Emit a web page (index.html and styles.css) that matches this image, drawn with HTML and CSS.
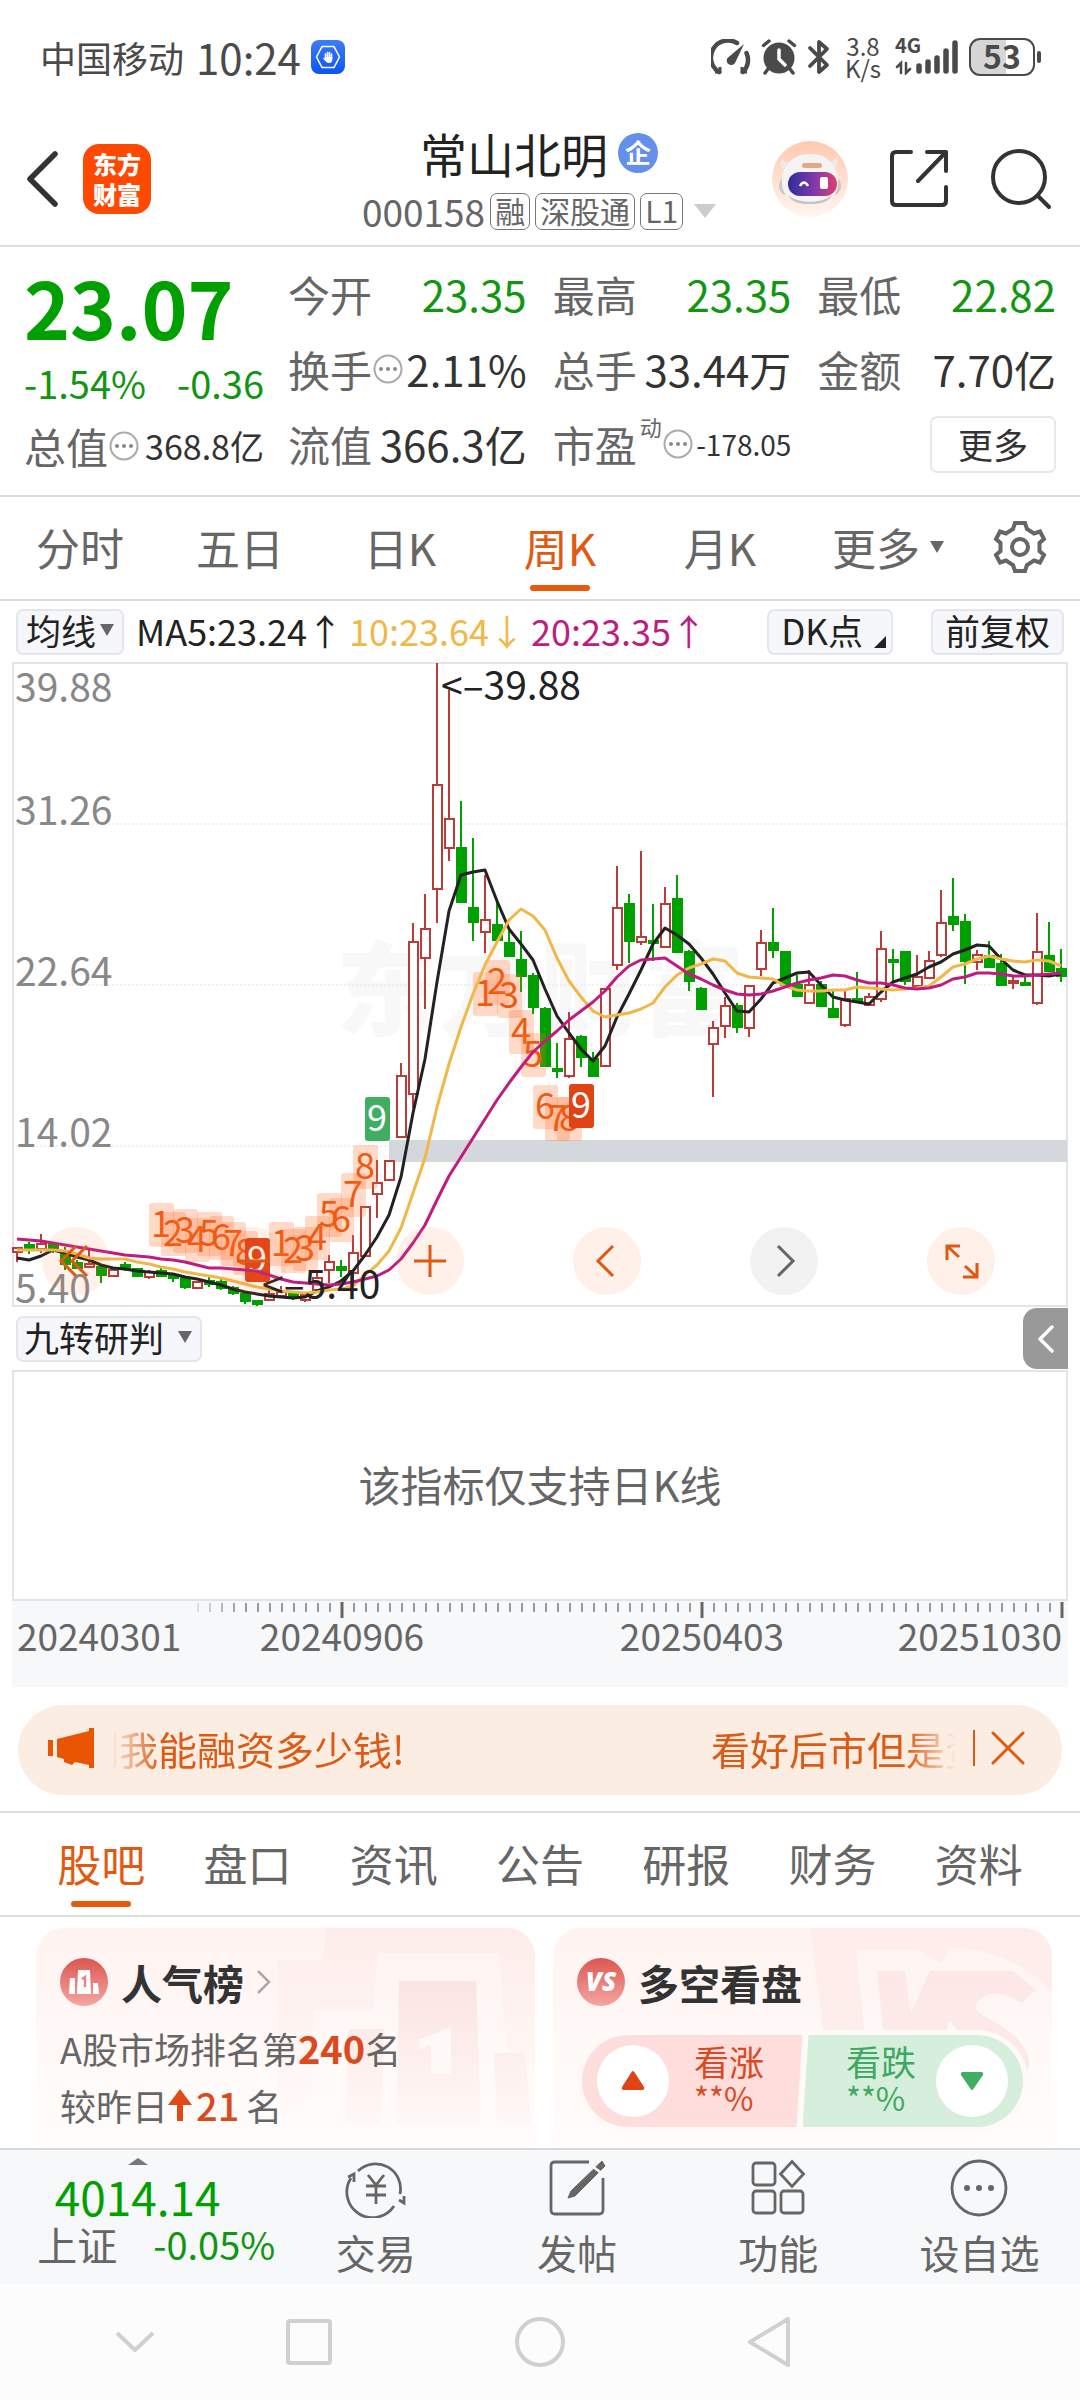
FILE: index.html
```html
<!DOCTYPE html>
<html lang="zh-CN">
<head>
<meta charset="utf-8">
<meta name="viewport" content="width=device-width, initial-scale=1">
<title>常山北明 000158</title>
<link rel="stylesheet" href="styles.css">
</head>
<body>
<div class="status">
  <span class="carrier">中国移动</span>
  <span class="clock">10:24</span>
  <svg class="hand" width="34" height="34" viewBox="0 0 34 34" aria-hidden="true">
    <defs><linearGradient id="blue" x1="0" y1="0" x2="0" y2="1"><stop offset="0" stop-color="#3c7cf5"/><stop offset="1" stop-color="#0d55f5"/></linearGradient></defs>
    <rect width="34" height="34" rx="8" fill="url(#blue)"/>
    <path d="M11 6.500H23L28.500 17 23 27.500H11L5.500 17Z" fill="none" stroke="#fff" stroke-width="1.600" stroke-linejoin="round"/>
    <path d="M14.500 14V18M16.500 12.500V18M18.500 12.500V18M20.500 14V19" stroke="#fff" stroke-width="1.600" stroke-linecap="round"/>
    <path d="M13.700 17H21.300V19C21.300 22 20 23 18 23 15.500 23 14.500 21 12 18.500 12.500 17.300 13.300 17.800 14 19Z" fill="#fff"/>
  </svg>
  <div class="status-icons">
    <svg width="40" height="36" viewBox="0 0 40 36" fill="none" stroke="#4a4a4a" stroke-width="4.500" aria-hidden="true">
      <path d="M8 33A17 17 0 0 1 26 4M35.500 14A17 17 0 0 1 32 33" stroke-linecap="round"/>
      <path d="M4 33H9V28M36 33H31V28" stroke-width="3"/>
      <path d="M33 5L24 24A4.500 4.500 0 0 1 16.500 19Z" fill="#4a4a4a" stroke="none"/>
    </svg>
    <svg width="36" height="36" viewBox="0 0 36 36" fill="none" stroke="#4a4a4a" stroke-linecap="round" aria-hidden="true">
      <circle cx="18" cy="19" r="15.500" fill="#4a4a4a" stroke="none"/>
      <path d="M2.500 6.500L8 2M33.500 6.500L28 2M7 30L4 34M29 30L32 34" stroke-width="3.500"/>
      <path d="M18 11V20L24 26" stroke="#fff" stroke-width="3.500"/>
    </svg>
    <svg width="24" height="36" viewBox="0 0 24 36" fill="none" stroke="#4a4a4a" stroke-width="3.800" stroke-linejoin="round" stroke-linecap="round" aria-hidden="true">
      <path d="M3 9L20 26 12 33V3L20 10 3 27"/>
    </svg>
    <div class="speed"><span>3.8</span><span>K/s</span></div>
    <div class="signal">
      <span class="net">4G</span>
      <svg width="64" height="36" viewBox="0 0 64 36" fill="none" stroke="#4a4a4a" stroke-linecap="round" aria-hidden="true">
        <path d="M24 27V32M33 23V32M42 19V32M51 12V32M60 4V32" stroke-width="5.500"/>
        <path d="M2 28L6 24V34M11 24V34L15 30" stroke-width="2.500"/>
      </svg>
    </div>
    <div class="battery"><span>53</span></div>
  </div>
</div>

<header class="header">
  <div class="header-left">
    <button class="icon-btn" aria-label="返回">
      <svg width="34" height="58" viewBox="0 0 34 58" fill="none" stroke="#333" stroke-width="5.500" stroke-linecap="round" stroke-linejoin="round"><path d="M29 4L4 29 29 54"/></svg>
    </button>
    <a href="#home" class="logo"><span>东方</span><span>财富</span></a>
  </div>
  <div class="header-title">
    <h1>常山北明<span class="ent">企</span></h1>
    <div class="code-row"><span class="code">000158</span><span class="tag">融</span><span class="tag">深股通</span><span class="tag">L1</span><i class="tri tri-light"></i></div>
  </div>
  <div class="header-right">
    <button class="icon-btn" aria-label="智能助手">
      <svg width="76" height="76" viewBox="0 0 76 76">
        <defs>
          <linearGradient id="peach" x1="0" y1="0" x2="0" y2="1"><stop offset="0" stop-color="#ffc9ae"/><stop offset="1" stop-color="#fff6f1"/></linearGradient>
          <linearGradient id="visor"><stop offset="0" stop-color="#2b2d9e"/><stop offset=".6" stop-color="#8c3aa8"/><stop offset="1" stop-color="#e0406a"/></linearGradient>
        </defs>
        <circle cx="38" cy="38" r="38" fill="url(#peach)"/>
        <path d="M9 17C9 27 10 30 18 31L22 21C14 23 11 20 9 17ZM65 15C66 25 64 29 57 29L53 20C60 22 63 19 65 15Z" fill="#efe9ea"/>
        <rect x="7" y="36" width="62" height="18" rx="8" fill="#cfc7cd"/>
        <path d="M38 13C57 13 66 26 66 41 66 56 56 62 38 62S10 56 10 41C10 26 19 13 38 13Z" fill="#f6f3f4"/>
        <path d="M16 54C25 63 51 63 60 54 56 62 48 63 38 63S20 62 16 54Z" fill="#c9c0ca"/>
        <rect x="16" y="31" width="49" height="24" rx="12" fill="url(#visor)"/>
        <path d="M28 45Q32 38 36 45" fill="none" stroke="#fff" stroke-width="2.500"/>
        <rect x="48" y="36" width="8" height="12" rx="2" fill="#fff"/>
        <rect x="30" y="22" width="20" height="5" rx="2.500" fill="#e5a981"/>
      </svg>
    </button>
    <button class="icon-btn" aria-label="分享">
      <svg width="58" height="60" viewBox="0 0 58 60" fill="none" stroke="#333" stroke-width="4" stroke-linecap="round" stroke-linejoin="round"><path d="M21 3H6Q2 3 2 7V52Q2 56 6 56H52Q56 56 56 52V38M37 3H56V22M56 3L28 32"/></svg>
    </button>
    <button class="icon-btn" aria-label="搜索">
      <svg width="62" height="62" viewBox="0 0 62 62" fill="none" stroke="#333" stroke-width="4" stroke-linecap="round"><circle cx="29" cy="29" r="26"/><path d="M48 48L59 59"/></svg>
    </button>
  </div>
</header>

<section class="quote">
  <div class="price-col">
    <strong class="price">23.07</strong>
    <div class="change"><span>-1.54%</span><span>-0.36</span></div>
    <div class="cell"><span class="label">总值<svg class="dots"><use href="#dots"/></svg></span><span class="value mid">368.8亿</span></div>
  </div>
  <div class="facts">
    <div class="cell"><span class="label">今开</span><span class="value down">23.35</span></div>
    <div class="cell"><span class="label">最高</span><span class="value down">23.35</span></div>
    <div class="cell"><span class="label">最低</span><span class="value down">22.82</span></div>
    <div class="cell"><span class="label">换手<svg class="dots"><use href="#dots"/></svg></span><span class="value">2.11%</span></div>
    <div class="cell"><span class="label">总手</span><span class="value">33.44万</span></div>
    <div class="cell"><span class="label">金额</span><span class="value">7.70亿</span></div>
    <div class="cell"><span class="label">流值</span><span class="value">366.3亿</span></div>
    <div class="cell"><span class="label">市盈<sup>动</sup><svg class="dots"><use href="#dots"/></svg></span><span class="value small">-178.05</span></div>
    <div class="cell cell-end"><button class="more">更多</button></div>
  </div>
</section>

<nav class="periods">
  <button>分时</button><button>五日</button><button>日K</button><button class="on">周K</button><button>月K</button><button class="has-tri">更多<i class="tri tri-small"></i></button>
  <button aria-label="设置"><svg width="54" height="54" viewBox="-27 -27 54 54" fill="none" stroke="#666" stroke-width="4"><path d="M-5-24H5L7-18 14-13.500 20-15.500 24-8 19.500-4V4L24 8 20 15.500 14 13.500 7 18 5 24H-5L-7 18-14 13.500-20 15.500-24 8-19.500 4V-4L-24-8-20-15.500-14-13.500-7-18Z"/><circle r="8"/></svg></button>
</nav>

<div class="ma-row">
  <button class="chip">均线<i class="tri tri-small"></i></button>
  <span class="ma"><span>MA5:23.24↑</span><span class="ma10">10:23.64↓</span><span class="ma20">20:23.35↑</span></span>
  <button class="chip chip-dk">DK点<i class="corner"></i></button>
  <button class="chip">前复权</button>
</div>

<section class="chart">
  <svg id="kline" viewBox="0 0 1056 645" role="img" aria-label="周K线图"></svg>
  <div class="chart-tools">
    <button aria-label="后退"><svg viewBox="0 0 68 68"><path d="M34 19L19 34 34 49M45 19L30 34 45 49"/></svg></button>
    <button aria-label="缩小"><svg viewBox="0 0 68 68"><path d="M18 34H50"/></svg></button>
    <button aria-label="放大"><svg viewBox="0 0 68 68"><path d="M34 18V50M18 34H50"/></svg></button>
    <button aria-label="向左"><svg viewBox="0 0 68 68"><path d="M40 19L25 34 40 49"/></svg></button>
    <button class="off" aria-label="向右"><svg viewBox="0 0 68 68"><path d="M28 19L43 34 28 49"/></svg></button>
    <button aria-label="全屏"><svg viewBox="0 0 68 68"><path d="M20 33V19H33M20 19L32 30M50 36V50H36M50 50L38 39"/></svg></button>
  </div>
</section>

<div class="indicator-row">
  <button class="chip">九转研判<i class="tri tri-gap"></i></button>
  <button class="fold" aria-label="展开"><svg width="18" height="28" viewBox="0 0 18 28" fill="none" stroke="#fff" stroke-width="3.500" stroke-linecap="round" stroke-linejoin="round"><path d="M15 2L3 14 15 26"/></svg></button>
</div>
<div class="subchart">该指标仅支持日K线</div>
<svg id="dates" class="dates" viewBox="0 0 1056 86" role="img" aria-label="日期"></svg>

<div class="banner">
  <svg width="46" height="40" viewBox="0 0 46 40" fill="#ea5504" aria-hidden="true"><path d="M0 12H5V28H0ZM9 11L41 3V0H46V40H41V37L27 34 24 37 16 34V31L9 29Z"/></svg>
  <div class="ticker"><span class="first">测我能融资多少钱!</span><span class="next">看好后市但是资</span></div>
  <i class="bar"></i>
  <button class="icon-btn" aria-label="关闭"><svg width="34" height="34" viewBox="0 0 34 34" fill="none" stroke="#e05a12" stroke-width="3" stroke-linecap="round"><path d="M2 2L32 32M32 2L2 32"/></svg></button>
</div>

<nav class="tabs">
  <button class="on">股吧</button><button>盘口</button><button>资讯</button><button>公告</button><button>研报</button><button>财务</button><button>资料</button>
</nav>

<section class="cards">
  <article class="card">
    <svg class="deco" width="257" height="206" viewBox="0 0 257 206" aria-hidden="true">
      <defs><linearGradient id="rose" x1="0" y1="0" x2="0" y2="1"><stop offset="0" stop-color="#fbe4e2"/><stop offset="1" stop-color="#fff8f6"/></linearGradient></defs>
      <path d="M48 0H257V140L228 120 221 25H100L95 82H35V170L0 190V32H45Z" fill="url(#rose)" opacity=".45"/>
      <path d="M121 53H198L203 196H118ZM71 101H106L103 196H67ZM216 125H247L253 196H219Z" fill="url(#rose)"/>
      <path d="M141 112L173 99V146H153V116L142 122Z" fill="#fffaf8"/>
    </svg>
    <h2>
      <svg width="48" height="48" viewBox="0 0 48 48" aria-hidden="true"><defs><linearGradient id="red" x1="0" y1="0" x2="0" y2="1"><stop offset="0" stop-color="#dc5650"/><stop offset="1" stop-color="#f5a6a3"/></linearGradient></defs><circle cx="24" cy="24" r="24" fill="url(#red)"/><path d="M18 12H30L31 36H17ZM10 20H15V36H9ZM33 25H38L39 36H33Z" fill="#fff"/><path d="M22 21L25 19V29" fill="none" stroke="#e98583" stroke-width="2.500"/></svg>
      人气榜
      <svg width="14" height="26" viewBox="0 0 14 26" fill="none" stroke="#aaa" stroke-width="2.500" aria-hidden="true"><path d="M1 2L12 13 1 24"/></svg>
    </h2>
    <p>A股市场排名第<b>240</b>名</p>
    <p>较昨日<svg width="24" height="34" viewBox="0 0 24 34" fill="#e04a16" aria-hidden="true"><path d="M12 1L24 17H15V33H9V17H0Z"/></svg><b class="step">21</b> 名</p>
  </article>
  <article class="card">
    <svg class="deco" width="242" height="206" viewBox="0 0 242 206" aria-hidden="true">
      <path d="M0 0H242V64Q200 20 140 20L130 35 110 22H46L55 110H14Z" fill="#fde9e7" opacity=".7"/>
      <path d="M67 43H95L101 85 120 43H203L226 62 212 75Q180 56 166 76C160 90 205 92 219 130Q222 150 190 190L150 108 140 92 130 120H75Z" fill="#fce2e1" opacity=".7"/>
    </svg>
    <h2>
      <span class="vs">VS</span>
      多空看盘
    </h2>
    <div class="vote">
      <button class="rise"><span class="knob"><svg width="24" height="20" viewBox="0 0 24 20" fill="#e04316"><path d="M12 0Q13 0 14 2L23 16Q24 19 21 19H3Q0 19 1 16L10 2Q11 0 12 0Z"/></svg></span><span class="txt">看涨<small>**%</small></span></button>
      <button class="fall"><span class="txt">看跌<small>**%</small></span><span class="knob"><svg width="24" height="20" viewBox="0 0 24 20" fill="#3fae62"><path d="M12 19Q13 19 14 17L23 4Q24 1 21 1H3Q0 1 1 4L10 17Q11 19 12 19Z"/></svg></span></button>
    </div>
  </article>
</section>

<footer class="toolbar">
  <a href="#index" class="index">
    <i class="caret"></i>
    <strong>4014.14</strong>
    <span class="index-row"><span>上证</span><span class="down">-0.05%</span></span>
  </a>
  <a href="#trade"><svg viewBox="0 0 60 60" width="64" height="60"><path d="M12 13A25 25 0 0 1 54 36M48 48A25 25 0 0 1 5 20M2 19L8 16V24M58 38V45L53 42"/><path d="M22 17L30 27 38 17M20 28H40M20 37H40M30 27V46"/></svg>交易</a>
  <a href="#post"><svg viewBox="0 0 60 60" width="60" height="60"><path d="M42 4H8Q4 4 4 8V52Q4 56 8 56H52Q56 56 56 52V20"/><path d="M55 3L58 8 28 38 21 40 24 33Z" fill="#666" stroke-width="1"/><path d="M45 8L53 14" stroke="#f6f8fa"/></svg>发帖</a>
  <a href="#tools"><svg viewBox="0 0 60 60" width="60" height="60"><rect x="5" y="5" width="22" height="22" rx="3"/><rect x="5" y="33" width="22" height="22" rx="3"/><rect x="33" y="33" width="22" height="22" rx="3"/><path d="M44 3.500L55.500 16 44 28.500 32.500 16Z"/></svg>功能</a>
  <a href="#watch"><svg viewBox="0 0 60 60" width="60" height="60"><circle cx="30" cy="30" r="27"/><g fill="#666" stroke="none"><circle cx="18" cy="30" r="3"/><circle cx="30" cy="30" r="3"/><circle cx="42" cy="30" r="3"/></g></svg>设自选</a>
</footer>

<nav class="sysnav">
  <button aria-label="收起"><svg width="40" height="24" viewBox="0 0 40 24"><path d="M2 3L20 20 38 3" stroke-width="4"/></svg></button>
  <button aria-label="多任务"><svg width="48" height="48" viewBox="0 0 48 48"><rect x="3" y="3" width="42" height="42" rx="2"/></svg></button>
  <button aria-label="主页"><svg width="52" height="52" viewBox="0 0 52 52"><circle cx="26" cy="26" r="23"/></svg></button>
  <button aria-label="返回上级"><svg width="46" height="52" viewBox="0 0 46 52"><path d="M42 3V49L4 26Z"/></svg></button>
</nav>

<svg class="sprite" aria-hidden="true">
  <symbol id="dots" viewBox="0 0 30 30"><circle cx="15" cy="15" r="13.500" fill="none" stroke="#aaa" stroke-width="2"/><g fill="#888"><circle cx="8" cy="15" r="2"/><circle cx="15" cy="15" r="2"/><circle cx="22" cy="15" r="2"/></g></symbol>
</svg>
<script src="chart.js"></script>
</body>
</html>
```

FILE: styles.css
```css
* { box-sizing: border-box; }
body {
  margin: 0;
  min-height: 100vh;
  display: flex;
  flex-direction: column;
  background: #fff;
  color: #333;
  font-family: "Noto Sans CJK SC", sans-serif;
  font-size: 42px;
  line-height: 1;
}
h1, h2, p { margin: 0; font-weight: 400; }
button { border: 0; padding: 0; background: none; color: inherit; font: inherit; cursor: pointer; }
a { color: inherit; text-decoration: none; }
svg { display: block; flex: none; }
.sprite { position: absolute; width: 0; height: 0; }
.down { color: #119611; }
.icon-btn { display: flex; }

.tri {
  display: inline-block;
  flex: none;
  border-style: solid;
  border-color: #666 transparent transparent;
  border-width: 12px 7px 0;
}
.tri-light { border-color: #ccc transparent transparent; border-width: 14px 11px 0; margin-left: 6px; }
.tri-gap { margin-left: 10px; }

/* system status */
.status {
  display: flex;
  align-items: center;
  height: 116px;
  padding: 0 38px 2px 40px;
  color: #4a4a4a;
}
.carrier { font-size: 36px; }
.clock { font-size: 42px; margin-left: 12px; }
.hand { margin-left: 10px; }
.status-icons { display: flex; align-items: center; gap: 10px; margin-left: auto; }
.speed { display: flex; flex-direction: column; align-items: center; width: 44px; font-size: 24px; line-height: 22px; }
.signal { position: relative; }
.net { position: absolute; left: 0; top: -4px; font-size: 20px; font-weight: 700; }
.battery {
  position: relative;
  width: 66px;
  height: 38px;
  margin-right: 7px;
  border: 2px solid #4a4a4a;
  border-radius: 11px;
  background: linear-gradient(90deg, #d6d6d6 56%, #fff 56%);
  font-size: 32px;
  font-weight: 700;
  line-height: 30px;
  text-align: center;
}
.battery::after { content: ""; position: absolute; right: -8px; top: 11px; width: 4px; height: 12px; border-radius: 2px; background: #4a4a4a; }

/* header */
.header {
  display: grid;
  grid-template-columns: 1fr auto 1fr;
  align-items: center;
  height: 131px;
  padding: 0 28px 4px 26px;
  border-bottom: 2px solid #ddd;
}
.header-left, .header-right { display: flex; align-items: center; }
.header-left { gap: 23px; }
.header-right { justify-content: flex-end; gap: 42px; }
.logo {
  display: flex;
  flex-direction: column;
  align-items: center;
  justify-content: center;
  width: 68px;
  height: 70px;
  border-radius: 16px;
  background: #ff4800;
  color: #fff;
  font-size: 24px;
  font-weight: 900;
  line-height: 30px;
}
.header-title { display: flex; flex-direction: column; align-items: center; gap: 9px; }
h1 { display: flex; align-items: center; gap: 10px; font-size: 47px; line-height: 50px; padding-bottom: 6px; color: #222; }
.ent {
  width: 40px;
  height: 40px;
  border-radius: 50%;
  background: #6490ea;
  color: #fff;
  font-size: 26px;
  font-weight: 700;
  line-height: 38px;
  text-align: center;
}
.code-row { display: flex; align-items: center; gap: 5px; color: #666; line-height: 37px; }
.code { font-size: 37px; }
.tag { height: 37px; padding: 0 4px; border: 1px solid #777; border-radius: 7px; font-size: 30px; line-height: 33px; }

/* quote */
.quote { display: flex; gap: 24px; height: 250px; padding: 20px 24px 0; border-bottom: 2px solid #ddd; }
.price-col { width: 240px; flex: none; }
.price { display: block; font-size: 78px; font-weight: 700; line-height: 78px; color: #00a000; }
.change { display: flex; justify-content: space-between; font-size: 38px; line-height: 76px; color: #119611; }
.facts { flex: 1; display: grid; grid-template-columns: repeat(3, 1fr); column-gap: 26px; grid-auto-rows: 75px; align-content: start; }
.cell { display: flex; align-items: center; justify-content: space-between; white-space: nowrap; height: 54px; }
.price-col .cell { height: 50px; }
.label { display: flex; align-items: center; color: #666; }
.label sup { align-self: flex-start; font-size: 22px; line-height: 22px; margin: -8px 0 0 3px; }
.dots { width: 30px; height: 30px; margin-left: 1px; }
.mid { font-size: 34px; }
.small { font-size: 28px; }
.cell-end { justify-content: flex-end; }
.more { width: 126px; height: 57px; border: 2px solid #e6e8ea; border-radius: 7px; font-size: 35px; line-height: 48px; }

/* tab strips */
.periods, .tabs { display: grid; height: 104px; border-bottom: 2px solid #ddd; color: #666; font-size: 44px; }
.periods { grid-template-columns: repeat(6, 4fr) 3fr; }
.periods button, .tabs button { position: relative; display: flex; align-items: center; justify-content: center; padding-bottom: 2px; }
.periods .has-tri { gap: 10px; padding-left: 16px; }
.on { color: #e05a12; }
.on::after { content: ""; position: absolute; left: 50%; bottom: 8px; width: 60px; height: 6px; margin-left: -30px; border-radius: 3px; background: #e65a0c; }

/* moving averages */
.ma-row { display: flex; align-items: center; height: 61px; padding: 0 16px; font-size: 36px; color: #222; }
.ma { display: flex; flex: 1; gap: 6px; margin-left: 12px; padding-bottom: 4px; white-space: nowrap; }
.ma10 { color: #f0b848; }
.ma20 { color: #c01c80; }
.chip {
  position: relative;
  display: flex;
  align-items: center;
  gap: 4px;
  height: 46px;
  padding: 0 8px 4px;
  border: 2px solid #e4e6ea;
  border-radius: 7px;
  background: #f6f7fa;
  color: #222;
  font-size: 35px;
}
.chip-dk { padding: 0 28px 4px 12px; margin-right: 38px; }
.ma-row .chip:last-child { padding: 0 12px 4px; }
.corner { position: absolute; right: 5px; bottom: 5px; border-style: solid; border-width: 0 0 12px 12px; border-color: transparent transparent #222; }

/* chart */
.chart { position: relative; margin: 0 12px; }
.chart > svg { width: 100%; height: auto; }
.chart text { font-family: "Noto Sans CJK SC", sans-serif; font-size: 39px; }
.grid { stroke: #e4e4e4; stroke-dasharray: 2 2; }
.frame { fill: none; stroke: #e4e4e4; stroke-width: 2; }
.chart .mark { fill: #f8f8f8; font-size: 102px; font-weight: 900; }
.axis { fill: #888; }
.note { fill: #222; }
.band { fill: #d4d7db; }
.up { fill: #fff; stroke: #b93c38; stroke-width: 2; }
.dn { fill: #00a000; stroke: #00a000; stroke-width: 2; }
.line { fill: none; stroke-width: 3; stroke-linejoin: round; }
.line5 { stroke: #222; }
.line10 { stroke: #f0b848; }
.line20 { stroke: #c01c80; }
.sig rect { fill: #ff6a28; opacity: .25; }
.chart .sig text { fill: #f05a10; font-size: 36px; text-anchor: middle; }
.sig.hot rect { fill: #e04316; opacity: 1; }
.sig.cool rect { fill: #3fae62; opacity: 1; }
.chart .sig.hot text, .chart .sig.cool text { fill: #fff; }
.chart-tools { position: absolute; left: 30px; right: 73px; bottom: 12px; display: flex; justify-content: space-between; }
.chart-tools button { width: 68px; height: 68px; border-radius: 50%; background: rgba(255, 110, 40, .1); }
.chart-tools svg { width: 68px; height: 68px; fill: none; stroke: #dc5a14; stroke-width: 3; }
.chart-tools .off { background: rgba(0, 0, 0, .05); }
.chart-tools .off svg { stroke: #666; }

.indicator-row { display: flex; align-items: center; justify-content: space-between; height: 63px; padding: 0 12px 0 16px; }
.indicator-row .chip { padding: 0 8px 4px 6px; }
.fold { display: flex; align-items: center; justify-content: center; width: 45px; height: 61px; border-radius: 14px 0 0 14px; background: #999; }
.subchart { display: flex; align-items: center; justify-content: center; height: 231px; margin: 0 12px; padding-bottom: 4px; border: 2px solid #e4e4e4; color: #666; }
.dates { width: calc(100% - 24px); height: auto; margin: 0 12px; background: #f7f8fa; }
.dates text { fill: #666; font-size: 37px; }
.dates .tick { stroke: #999; stroke-width: 2; }
.dates .major { stroke: #666; stroke-width: 3; }

/* banner */
.banner {
  display: flex;
  align-items: center;
  height: 90px;
  margin: 18px 18px 16px;
  padding: 0 37px 4px 30px;
  border-radius: 45px;
  background: #fcede3;
  color: #dc5a14;
  font-size: 39px;
}
.ticker {
  flex: 1;
  display: flex;
  justify-content: space-between;
  margin: 0 17px;
  overflow: hidden;
  white-space: nowrap;
  line-height: 54px;
  -webkit-mask-image: linear-gradient(90deg, transparent, #000 50px, #000 calc(100% - 50px), transparent);
  mask-image: linear-gradient(90deg, transparent, #000 50px, #000 calc(100% - 50px), transparent);
}
.first { margin-left: -31px; }
.next { margin-right: -28px; }
.bar { width: 2px; height: 36px; margin-right: 16px; background: #dc5a14; }

.tabs { grid-template-columns: repeat(7, 1fr); height: 106px; padding: 0 28px; border-top: 2px solid #ddd; }

/* cards */
.cards { display: grid; grid-template-columns: 1fr 1fr; gap: 18px; padding: 11px 28px 0 36px; flex: 1; }
.card { position: relative; min-height: 219px; padding: 28px 24px 8px; border-radius: 28px 28px 0 0; background: linear-gradient(#fff3f1, #fffaf8 60%, #fffcfb); overflow: hidden; font-size: 36px; color: #666; }
.deco { position: absolute; right: 0; top: 0; }
h2 { position: relative; display: flex; align-items: center; gap: 13px; height: 52px; color: #333; font-size: 41px; line-height: 38px; font-weight: 700; }
.card p { position: relative; display: flex; align-items: center; height: 57px; }
.card h2 + p { margin-top: 11px; }
.card b { color: #d94a1e; font-size: 38px; }
.step { font-weight: 500; margin: 0 7px 0 4px; }
.vs { width: 48px; height: 48px; border-radius: 50%; background: linear-gradient(#dc5650, #f5a6a3); color: #fff; font: italic 900 26px/47px "Open Sans", sans-serif; text-align: center; }
.vote { position: relative; display: flex; margin: 22px 0 0; padding: 5px; border-radius: 52px; background: #fffaf8; }
.vote button { display: flex; align-items: center; flex: 1; height: 92px; line-height: 36px; }
.rise { padding-left: 15px; border-radius: 46px 0 0 46px; background: #fddedc; color: #d94a24; clip-path: polygon(0 0, 100% 0, calc(100% - 6px) 100%, 0 100%); }
.fall { justify-content: flex-end; padding-right: 15px; border-radius: 0 46px 46px 0; background: #d6efdd; color: #3fa862; clip-path: polygon(6px 0, 100% 0, 100% 100%, 0 100%); }
.knob { display: flex; align-items: center; justify-content: center; width: 72px; height: 72px; border-radius: 50%; background: #fff; }
.txt { display: flex; flex-direction: column; align-items: flex-start; font-size: 35px; padding-bottom: 4px; }
.txt small { font-size: 32px; }
.vote .rise .txt { margin-left: 25px; }
.vote .fall .txt { margin-right: 20px; }

/* bottom bars */
.toolbar { display: grid; grid-template-columns: 275fr repeat(4, 201fr); height: 136px; border-top: 2px solid #d6d9dc; background: #f6f8fa; color: #666; font-size: 40px; }
.toolbar a { display: flex; flex-direction: column; align-items: center; gap: 14px; padding-top: 8px; }
.toolbar a svg { fill: none; stroke: #666; stroke-width: 2.800; }
.toolbar .index { gap: 0; padding-top: 8px; }
.caret { border-style: solid; border-width: 0 10px 7px; border-color: transparent transparent #777; }
.index strong { font-size: 46px; font-weight: 400; line-height: 62px; color: #00a000; }
.index-row { display: flex; align-items: center; justify-content: space-between; align-self: flex-end; width: 238px; line-height: 34px; }
.index-row .down { font-size: 38px; }
.sysnav { display: grid; grid-template-columns: 174fr 174fr 288fr 170fr 226fr; height: 116px; padding-left: 48px; background: #fcfcfc; }
.sysnav button { display: flex; align-items: center; justify-content: center; }
.sysnav svg { fill: none; stroke: #d0d0d0; stroke-width: 4; stroke-linejoin: round; }
```

FILE: chart.js
```js
// Rows run from HIGH_ROW (39.88) down to LOW_ROW (5.40).
const HIGH_ROW = 33, LOW_ROW = 1537, HEIGHT = 643, STEP = 12;
const X = i => 5 + STEP * i;
const Y = row => 1 + Math.round((row - HIGH_ROW) / (LOW_ROW - HIGH_ROW) * HEIGHT);

// direction, high, body top, body bottom, low
const candles = `u 1400 1402 1410 1435|d 1387 1395 1403 1416|u 1368 1391 1403 1412|d 1390 1393 1405 1412|d 1398 1410 1438 1452|d 1430 1436 1448 1448|u 1405 1439 1446 1448|d 1445 1445 1465 1483|u 1450 1453 1467 1470|d 1435 1440 1450 1455|d 1448 1450 1466 1468|u 1452 1458 1470 1473|d 1443 1455 1466 1467|d 1460 1465 1472 1480|d 1470 1472 1493 1497|u 1478 1480 1494 1496|d 1465 1478 1486 1492|d 1475 1482 1495 1500|d 1490 1496 1507 1512|d 1508 1508 1526 1532|d 1522 1526 1533 1538|u 1495 1510 1523 1525|u 1490 1504 1513 1515|d 1505 1510 1518 1522|u 1505 1512 1524 1528|u 1460 1472 1500 1500|u 1418 1433 1452 1483|d 1430 1445 1453 1468|u 1370 1412 1460 1485|u 1303 1305 1420 1420|u 1195 1250 1275 1332|u 1197 1198 1242 1243|u 968 1000 1142 1145|u 640 685 1040 1075|u 573 655 723 843|u 33 318 562 640|u 95 397 465 495|d 355 465 592 592|d 442 607 639 683|u 530 633 663 711|d 592 646 682 683|d 660 689 718 720|d 660 727 766 802|d 759 766 838 854|d 838 843 976 978|d 923 982 988 1003|u 850 913 1000 1003|d 902 907 955 977|d 943 960 998 998|u 795 795 975 975|u 508 605 740 751|d 573 597 684 735|u 472 675 685 693|d 596 684 689 730|u 556 597 698 700|d 530 585 708 708|d 705 709 776 800|d 792 796 843 845|u 870 886 925 1049|u 815 835 881 910|d 828 836 884 899|u 787 788 887 908|u 658 688 748 765|d 607 689 704 724|d 707 708 787 787|d 762 787 811 812|u 750 786 828 830|d 776 787 835 835|d 800 843 860 862|u 797 820 880 884|d 755 818 824 825|u 806 814 832 836|u 661 702 818 826|d 702 727 733 780|d 708 709 776 786|u 717 768 788 792|u 707 730 770 772|u 565 641 716 721|d 535 628 644 661|d 620 639 731 784|u 705 716 733 752|d 683 718 744 747|d 713 736 786 786|u 768 776 781 796|d 766 781 787 789|u 618 708 828 832|d 639 718 754 754|d 702 748 766 778`
  .split("|").map(c => c.split(" "));

const averages = {
  line5: [1424,1430,1420,1405,1412,1422,1430,1440,1447,1450,1454,1457,1459,1463,1470,1475,1480,1487,1497,1504,1508,1514,1517,1519,1517,1502,1492,1478,1455,1418,1375,1325,1235,1085,960,780,612,530,521,517,590,655,690,728,795,858,898,935,965,930,860,808,750,690,652,670,690,722,760,805,846,849,818,782,770,757,756,785,815,822,825,830,803,778,770,760,745,732,714,704,693,696,725,750,762,762,764,761],
  line10: [1406,1406,1405,1405,1408,1415,1425,1426,1427,1428,1433,1439,1445,1451,1457,1462,1466,1472,1478,1486,1492,1498,1502,1504,1506,1504,1500,1498,1490,1465,1440,1408,1355,1272,1190,1072,970,885,808,740,685,633,609,625,657,722,777,815,848,862,856,852,843,828,792,762,746,736,726,731,758,768,769,772,788,799,801,800,799,797,791,794,796,797,796,794,788,768,745,736,726,719,726,731,733,728,731,741],
  line20: [1380,1383,1386,1389,1394,1399,1404,1409,1414,1418,1421,1423,1426,1430,1435,1441,1447,1449,1451,1453,1456,1465,1475,1480,1484,1486,1487,1485,1482,1475,1466,1452,1428,1390,1348,1288,1233,1188,1145,1100,1056,1015,978,942,917,893,868,847,825,800,767,742,727,725,723,741,760,773,785,797,807,810,807,800,790,782,774,769,762,764,774,781,782,785,793,796,794,785,772,767,759,757,761,765,766,762,760,757]
};

// nine-turn counts: first week, then the row of each count from 1 up; the ninth is highlighted
const runs = [
  { start: 12, rows: [1347,1369,1362,1383,1368,1378,1393,1413,1430], nine: "hot" },
  { start: 22, rows: [1393,1408,1403,1378,1324,1335,1277,1211,1100], nine: "cool" },
  { start: 39, rows: [807,780,813,897,950,1071,1100,1100,1070], nine: "hot" }
];

let out = `<text class="mark" x="324" y="366">东方财富</text>`;
for (const y of [162, 323, 484]) out += `<path class="grid" d="M0 ${y}H1056"/>`;
out += `<rect class="frame" x="1" y="1" width="1054" height="643"/>`;
out += `<rect class="band" x="377" y="478" width="678" height="22"/>`;
candles.forEach(([dir, ...rows], i) => {
  const [h, t, b, l] = rows.map(r => Y(+r));
  const x = X(i), k = dir === "u" ? "up" : "dn", left = Math.max(x - 4, 1);
  out += `<path class="${k}" d="M${x} ${h}V${t}M${x} ${b}V${l}M${left} ${t}H${x + 5}V${Math.max(b, t + 2)}H${left}Z"/>`;
});
for (const run of runs) run.rows.forEach((row, n) => {
  const x = X(run.start + n), y = Y(row);
  out += `<g class="sig ${n === 8 ? run.nine : ""}"><rect x="${x - 12}" y="${y - 22}" width="25" height="44" rx="3"/><text x="${x}" y="${y + 12}">${n + 1}</text></g>`;
});
for (const [name, rows] of Object.entries(averages))
  out += `<path class="line ${name}" d="M${rows.map((r, i) => X(i) + " " + Y(r)).join("L")}"/>`;
[["39.88", 40], ["31.26", 163], ["22.64", 324], ["14.02", 485], ["5.40", 641]]
  .forEach(([t, y]) => out += `<text class="axis" x="3" y="${y}">${t}</text>`);
out += `<text class="note" x="429" y="38">&lt;–39.88</text><text class="note" x="250" y="637">&lt;–5.40</text>`;
document.getElementById("kline").innerHTML = out;

let axis = "";
for (let x = 186; x < 1050; x += STEP)
  axis += `<path class="tick" opacity="${Math.min(1, (x - 170) / 60)}" d="M${x} 2V11"/>`;
for (const x of [330, 690, 1050]) axis += `<path class="major" d="M${x} 1V17"/>`;
axis += `<text x="5" y="50">20240301</text><text x="330" y="50" text-anchor="middle">20240906</text>`
  + `<text x="690" y="50" text-anchor="middle">20250403</text><text x="1050" y="50" text-anchor="end">20251030</text>`;
document.getElementById("dates").innerHTML = axis;
```
